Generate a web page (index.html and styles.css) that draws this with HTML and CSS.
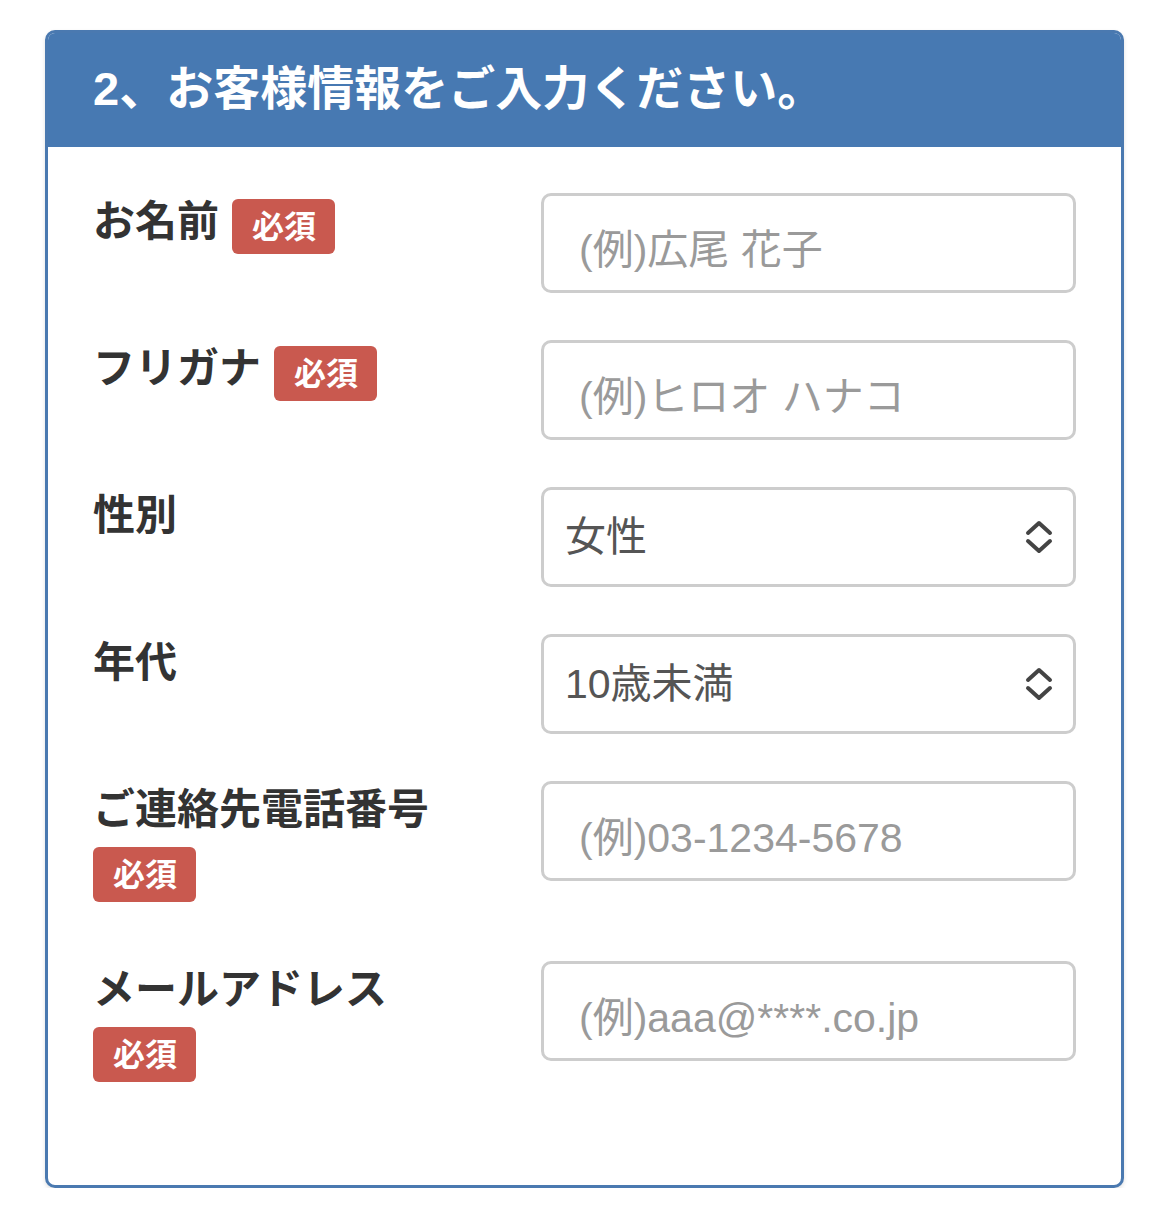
FILE: index.html
```html
<!DOCTYPE html>
<html lang="ja">
<head>
<meta charset="utf-8">
<title>お客様情報</title>
<link rel="stylesheet" href="styles.css">
</head>
<body>
<section class="card">
  <h2 class="card-head">2、お客様情報をご入力ください。</h2>
  <div class="card-body">
    <div class="row">
      <div class="label"><span class="label-text">お名前</span><span class="badge">必須</span></div>
      <div class="field"><input class="input" type="text" placeholder="(例)広尾 花子"></div>
    </div>
    <div class="row">
      <div class="label"><span class="label-text">フリガナ</span><span class="badge">必須</span></div>
      <div class="field"><input class="input" type="text" placeholder="(例)ヒロオ ハナコ"></div>
    </div>
    <div class="row">
      <div class="label"><span class="label-text">性別</span></div>
      <div class="field select-wrap">
        <select class="select">
          <option>女性</option>
          <option>男性</option>
        </select>
        <svg class="chevrons" width="30" height="36" viewBox="0 0 30 36"><polyline points="4,14 15,4 26,14" fill="none" stroke="#444" stroke-width="4" stroke-linecap="round" stroke-linejoin="round"/><polyline points="4,22 15,32 26,22" fill="none" stroke="#444" stroke-width="4" stroke-linecap="round" stroke-linejoin="round"/></svg>
      </div>
    </div>
    <div class="row">
      <div class="label"><span class="label-text">年代</span></div>
      <div class="field select-wrap">
        <select class="select">
          <option>10歳未満</option>
          <option>10代</option>
          <option>20代</option>
        </select>
        <svg class="chevrons" width="30" height="36" viewBox="0 0 30 36"><polyline points="4,14 15,4 26,14" fill="none" stroke="#444" stroke-width="4" stroke-linecap="round" stroke-linejoin="round"/><polyline points="4,22 15,32 26,22" fill="none" stroke="#444" stroke-width="4" stroke-linecap="round" stroke-linejoin="round"/></svg>
      </div>
    </div>
    <div class="row">
      <div class="label"><span class="label-text">ご連絡先電話番号</span><span class="badge">必須</span></div>
      <div class="field"><input class="input" type="tel" placeholder="(例)03-1234-5678"></div>
    </div>
    <div class="row">
      <div class="label"><span class="label-text">メールアドレス</span><span class="badge">必須</span></div>
      <div class="field"><input class="input" type="email" placeholder="(例)aaa@****.co.jp"></div>
    </div>
  </div>
</section>
</body>
</html>
```

FILE: styles.css
```css
* {
  box-sizing: border-box;
}

body {
  margin: 0;
  padding: 30px 46px 0 45px;
  background: #fff;
  font-family: "Liberation Sans", "Noto Sans CJK JP", sans-serif;
}

.card {
  border: 3px solid #4a79b0;
  border-radius: 10px;
  overflow: hidden;
  background: #fff;
  box-shadow: 0 2px 4px rgba(0, 0, 0, 0.12);
}

.card-head {
  margin: 0;
  height: 114px;
  background: #4779b2;
  color: #fff;
  font-size: 47px;
  font-weight: 700;
  display: flex;
  align-items: center;
  padding: 0 0 12px 45px;
}

.card-body {
  padding: 46px 45px 44px 45px;
}

.row {
  display: grid;
  grid-template-columns: 1fr 535px;
  margin-bottom: 47px;
}

.label {
  display: flex;
  flex-wrap: wrap;
  align-items: flex-start;
  align-content: flex-start;
  column-gap: 13px;
  row-gap: 3px;
  padding-bottom: 12px;
  max-width: 380px;
  font-size: 42px;
  font-weight: 700;
  color: #333;
  line-height: 57px;
}

.label-text {
  white-space: nowrap;
}

.badge {
  margin-top: 6px;
  height: 55px;
  padding: 0 19px 0 20px;
  background: #c9594f;
  color: #fff;
  font-size: 32px;
  font-weight: 700;
  line-height: 1;
  border-radius: 6px;
  display: flex;
  align-items: center;
}

.field {
  width: 535px;
}

.input {
  display: block;
  width: 100%;
  height: 100px;
  margin: 0;
  border: 3px solid #cdcdcd;
  border-radius: 10px;
  padding: 15px 0 0 35px;
  font: 41px "Liberation Sans", "Noto Sans CJK JP", sans-serif;
  color: #555;
  background: #fff;
  outline: none;
}

.input::placeholder {
  color: #9a9a9a;
}

.select-wrap {
  position: relative;
}

.select {
  display: block;
  width: 100%;
  height: 100px;
  margin: 0;
  border: 3px solid #cdcdcd;
  border-radius: 10px;
  padding: 0 60px 0 21px;
  font: 41px "Liberation Sans", "Noto Sans CJK JP", sans-serif;
  color: #555;
  background: #fff;
  appearance: none;
  -webkit-appearance: none;
  outline: none;
}

.chevrons {
  position: absolute;
  right: 22px;
  top: 50%;
  transform: translateY(-50%);
  pointer-events: none;
}
```
